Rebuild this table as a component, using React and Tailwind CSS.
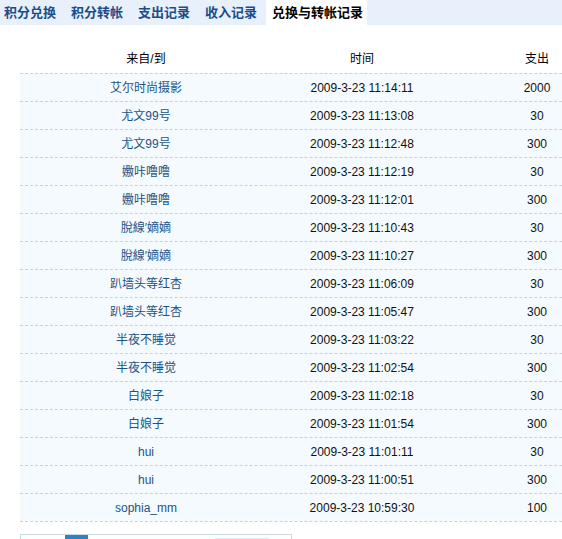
import React from "react";

const data = [
  ["艾尔时尚摄影", "2009-3-23 11:14:11", "2000"],
  ["尤文99号", "2009-3-23 11:13:08", "30"],
  ["尤文99号", "2009-3-23 11:12:48", "300"],
  ["嫐咔噜噜", "2009-3-23 11:12:19", "30"],
  ["嫐咔噜噜", "2009-3-23 11:12:01", "300"],
  ["脫線′嫡嫡", "2009-3-23 11:10:43", "30"],
  ["脫線′嫡嫡", "2009-3-23 11:10:27", "300"],
  ["趴墙头等红杏", "2009-3-23 11:06:09", "30"],
  ["趴墙头等红杏", "2009-3-23 11:05:47", "300"],
  ["半夜不睡觉", "2009-3-23 11:03:22", "30"],
  ["半夜不睡觉", "2009-3-23 11:02:54", "300"],
  ["白娘子", "2009-3-23 11:02:18", "30"],
  ["白娘子", "2009-3-23 11:01:54", "300"],
  ["hui", "2009-3-23 11:01:11", "30"],
  ["hui", "2009-3-23 11:00:51", "300"],
  ["sophia_mm", "2009-3-23 10:59:30", "100"],
];

const tabs = ["积分兑换", "积分转帐", "支出记录", "收入记录", "兑换与转帐记录"];

export default function App() {
  return (
    <div
      className="w-[562px] h-[539px] overflow-hidden bg-white text-[12px]"
      style={{ fontFamily: '"Liberation Sans", "Noto Sans CJK SC", sans-serif' }}
    >
      <div className="h-[25px] bg-[#e8f0fc] flex items-center pl-[4px] gap-[15px]">
        {tabs.map((t, i) => (
          <div
            key={t}
            className={
              i === 4
                ? "h-[25px] flex items-center bg-white -ml-[6px] pl-[6px] pr-[4px] text-black font-bold text-[13px]"
                : "h-[25px] flex items-center text-[#1a4d8c] font-bold text-[13px]"
            }
          >
            {t}
          </div>
        ))}
      </div>

      <div className="ml-[20px] mt-[20px] w-[602px]">
        <div className="grid grid-cols-[252px_180px_170px] h-[28px] items-center text-black">
          <div className="text-center">来自/到</div>
          <div className="text-center">时间</div>
          <div className="text-center">支出</div>
        </div>
        {data.map((r, i) => (
          <div
            key={i}
            className="grid grid-cols-[252px_180px_170px] h-[28px] items-center bg-[#f5fafe] border-t border-dashed border-[#d0d0d0]"
          >
            <div className="text-center text-[#1d5283]">{r[0]}</div>
            <div className="text-center text-[#111]">{r[1]}</div>
            <div className="text-center text-[#111]">{r[2]}</div>
          </div>
        ))}
        <div className="border-t border-dashed border-[#d0d0d0]" />
      </div>

      <div className="ml-[20px] mt-[12px] w-[272px] h-[20px] border border-[#c5dae8] bg-white flex items-start">
        <div className="ml-[44px] w-[23px] h-[20px] bg-[#2a83c5]" />
        <div className="ml-[127px] mt-[3px] w-[54px] h-[16px] bg-[#e4e9ef]" />
      </div>
    </div>
  );
}
